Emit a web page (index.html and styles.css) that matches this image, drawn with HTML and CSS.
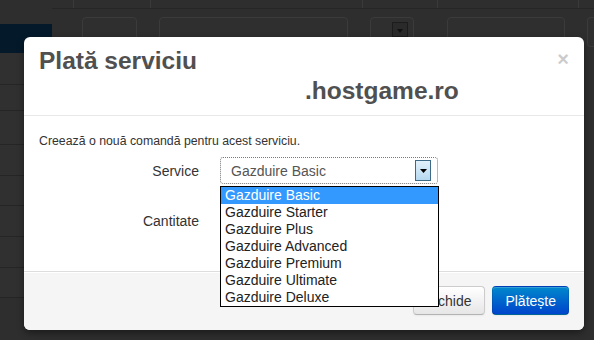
FILE: index.html
```html
<!DOCTYPE html>
<html lang="ro">
<head>
  <meta charset="UTF-8" />
  <meta name="viewport" content="width=device-width, initial-scale=1.0">
  <title>Plată serviciu</title>
  <link rel="stylesheet" href="styles.css">
</head>
<body>

  <!-- Pagina din spate (estompata) -->
  <div class="page">
    <aside class="sidebar">
      <div class="side-active"></div>
      <div class="side-row r1"></div>
      <div class="side-row r2"></div>
      <div class="side-row r3"></div>
      <div class="side-row r4"></div>
      <div class="side-row r5"></div>
      <div class="side-row r6"></div>
      <div class="side-row r7"></div>
      <div class="side-row r8"></div>
    </aside>
    <div class="main">
      <div class="topbar">
        <div class="cell c1"></div>
        <div class="cell c2"></div>
        <div class="cell c3"></div>
        <div class="cell c4"></div>
        <div class="cell c5"></div>
        <div class="cell c6"></div>
      </div>
      <div class="filters">
        <div class="fbox f1"></div>
        <div class="fbox f2"></div>
        <div class="fbox f3"><span class="fbtn"></span></div>
        <div class="fbox f4"></div>
        <div class="fbox f5"></div>
      </div>
    </div>
  </div>

  <!-- Modal -->
  <div class="modal">
    <div class="modal-header">
      <button class="close">&times;</button>
      <h3>Plată serviciu<br><span class="domain">.hostgame.ro</span></h3>
    </div>
    <div class="modal-body">
      <p class="intro">Creează o nouă comandă pentru acest serviciu.</p>
      <div class="control-group">
        <label class="control-label">Service</label>
        <div class="controls">
          <div class="select">
            <span class="select-value">Gazduire Basic</span>
            <span class="select-btn">
              <svg width="7" height="4" viewBox="0 0 7 4"><polygon points="0,0 7,0 3.5,4" fill="#000" /></svg>
            </span>
          </div>
          <ul class="dropdown">
            <li class="active">Gazduire Basic</li>
            <li>Gazduire Starter</li>
            <li>Gazduire Plus</li>
            <li>Gazduire Advanced</li>
            <li>Gazduire Premium</li>
            <li>Gazduire Ultimate</li>
            <li>Gazduire Deluxe</li>
          </ul>
        </div>
      </div>
      <div class="control-group">
        <label class="control-label">Cantitate</label>
        <div class="controls">
          <input class="qty" value="1">
        </div>
      </div>
    </div>
    <div class="modal-footer">
      <button class="btn">Închide</button>
      <button class="btn btn-primary">Plătește</button>
    </div>
  </div>

</body>
</html>
```

FILE: styles.css
```css
* {
  box-sizing: border-box;
}
body {
  margin: 0;
  width: 594px;
  height: 340px;
  overflow: hidden;
  background: #2c2c2c;
  font-family: 'Liberation Sans', Arial, sans-serif;
  font-size: 14px;
  line-height: 20px;
  color: #333;
  position: relative;
}

/* pagina din spate */
.page {
  display: flex;
  height: 340px;
}
.sidebar {
  width: 52px;
  padding-top: 24px;
  background: #2e2e2e;
}
.side-active {
  height: 29px;
  background: #04192a;
}
.side-row {
  border-bottom: 1px solid #252525;
  background: #303030;
}
.r1 { height: 32px; }
.r2 { height: 26px; }
.r3 { height: 34px; }
.r4 { height: 31px; }
.r5 { height: 30px; }
.r6 { height: 31px; }
.r7 { height: 31px; }
.r8 { height: 30px; }

.main {
  flex: 1;
  background: #2e2e2e;
}
.topbar {
  display: grid;
  grid-template-columns: 21px 77px 212px 75px 141px 1fr;
  height: 9px;
  border-bottom: 1px solid #262626;
}
.topbar .cell {
  border-left: 1px solid #3a3a3a;
}
.topbar .c1 {
  border-left: none;
}
.filters {
  display: flex;
  margin-top: 8px;
  padding-left: 30px;
}
.fbox {
  height: 30px;
  border: 1px solid #3b3b3b;
  border-radius: 4px;
  background: #2f2f2f;
  margin-right: 22px;
}
.f1 { width: 55px; }
.f2 { width: 189px; }
.f3 { width: 44px; margin-right: 33px; padding: 4px 0 0 21px; }
.f4 { width: 118px; }
.f5 { flex: 1; margin-right: 0; border-right: none; border-radius: 4px 0 0 4px; }
.fbtn {
  display: block;
  width: 16px;
  height: 15px;
  border: 1px solid #1c1c1c;
  background: #2a2a2a;
  position: relative;
}
.fbtn::after {
  content: "";
  position: absolute;
  left: 4px;
  top: 6px;
  border-left: 3px solid transparent;
  border-right: 3px solid transparent;
  border-top: 4px solid #111;
}

/* modal */
.modal {
  position: absolute;
  top: 37px;
  left: 24px;
  width: 560px;
  height: 293px;
  background: #fff;
  border-radius: 6px;
  box-shadow: 0 3px 7px rgba(0, 0, 0, 0.4);
  overflow: visible;
}
.modal-header {
  padding: 9px 15px;
  border-bottom: 1px solid #e8e8e8;
}
.modal-header h3 {
  margin: 0;
  font-size: 24.5px;
  line-height: 30px;
  font-weight: bold;
  color: #505050;
}
.domain {
  margin-left: 266px;
}
.close {
  float: right;
  margin-top: 3px;
  padding: 0;
  border: none;
  background: none;
  font-family: 'Liberation Sans', Arial, sans-serif;
  font-size: 20px;
  font-weight: bold;
  line-height: 20px;
  color: #000;
  opacity: 0.2;
}
.modal-body {
  padding: 15px 15px 0;
  height: 155px;
}
.intro {
  margin: 0 0 5px;
  font-size: 12.3px;
  line-height: 20px;
}
.control-group {
  display: flex;
  height: 30px;
  margin-bottom: 20px;
}
.control-label {
  width: 160px;
  padding-top: 5px;
  text-align: right;
  font-size: 14px;
}
.controls {
  margin-left: 21px;
  position: relative;
}
.select {
  display: flex;
  align-items: center;
  width: 218px;
  height: 27px;
  margin-top: 1px;
  border: 1px dotted #777;
  border-radius: 3px;
  padding: 0 6px 0 10px;
}
.select-value {
  flex: 1;
  font-size: 14px;
  color: #555;
}
.select-btn {
  display: flex;
  align-items: center;
  justify-content: center;
  width: 16px;
  height: 21px;
  border: 1px solid #3d6a86;
  background: linear-gradient(#e3f1fb, #b6d9f1);
}
.qty {
  width: 210px;
  height: 30px;
  border: 1px solid #ccc;
  border-radius: 4px;
  padding: 4px 6px;
  font-size: 14px;
}
.dropdown {
  position: absolute;
  top: 30px;
  left: 0;
  width: 219px;
  margin: 0;
  padding: 0;
  list-style: none;
  background: #fff;
  border: 1px solid #000;
  z-index: 2;
}
.dropdown li {
  height: 17px;
  padding-left: 4px;
  font-size: 14px;
  line-height: 17px;
  color: #222;
}
.dropdown li.active {
  background: #3399ff;
  color: #fff;
}
.modal-footer {
  padding: 14px 15px 15px;
  text-align: right;
  background: #f5f5f5;
  border-top: 1px solid #ddd;
  border-radius: 0 0 6px 6px;
  box-shadow: inset 0 1px 0 #fff;
}
.btn {
  display: inline-block;
  height: 29px;
  padding: 4px 12px;
  margin-left: 4px;
  font-family: 'Liberation Sans', Arial, sans-serif;
  font-size: 14px;
  line-height: 20px;
  color: #333;
  background: linear-gradient(#ffffff, #e6e6e6);
  border: 1px solid #ccc;
  border-bottom-color: #b3b3b3;
  border-radius: 4px;
  box-shadow: inset 0 1px 0 rgba(255, 255, 255, 0.2), 0 1px 2px rgba(0, 0, 0, 0.05);
}
.btn-primary {
  color: #fff;
  background: linear-gradient(#0088cc, #0044cc);
  border-color: rgba(0, 0, 0, 0.1) rgba(0, 0, 0, 0.1) rgba(0, 0, 0, 0.25);
}
```
